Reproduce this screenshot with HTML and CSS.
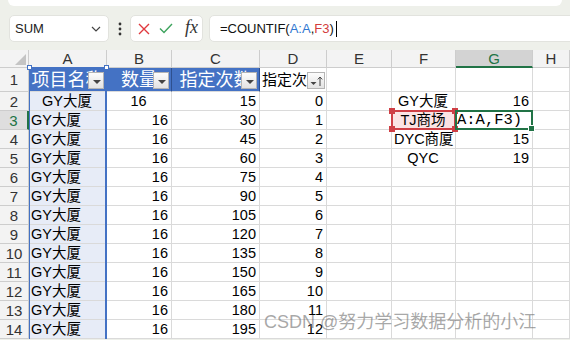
FILE: index.html
```html
<!DOCTYPE html>
<html lang="zh">
<head>
    <meta charset="UTF-8">
    <meta name="viewport" content="width=device-width, initial-scale=1.0">
    <title>COUNTIF</title>
    <link rel="stylesheet" href="styles.css">
</head>
<body>
    <div class="ribbon-edge"></div>

    <div class="formula-bar">
        <div class="name-box">
            <span>SUM</span>
            <svg width="10" height="6" viewBox="0 0 10 6"><polyline points="1,1 5,5 9,1" fill="none" stroke="#444" stroke-width="1.2"/></svg>
        </div>
        <div class="more">
            <svg width="4" height="14" viewBox="0 0 4 14"><circle cx="2" cy="2" r="1.4" fill="#333"/><circle cx="2" cy="7" r="1.4" fill="#333"/><circle cx="2" cy="12" r="1.4" fill="#333"/></svg>
        </div>
        <div class="fx-box">
            <svg width="12" height="12" viewBox="0 0 12 12"><path d="M1 1L11 11M11 1L1 11" stroke="#e0393e" stroke-width="1.4" fill="none"/></svg>
            <svg width="14" height="11" viewBox="0 0 14 11"><polyline points="1,5.5 5,9.5 13,1" fill="none" stroke="#3da35d" stroke-width="1.4"/></svg>
            <span class="fx">fx</span>
        </div>
        <div class="formula-input">=COUNTIF(<span class="ref-a">A:A</span>,<span class="ref-f">F3</span>)<span class="caret"></span></div>
    </div>

    <div class="sheet-wrap">
        <div class="sheet">
            <div class="corner"></div><div class="ch">A</div><div class="ch">B</div><div class="ch">C</div><div class="ch">D</div><div class="ch">E</div><div class="ch">F</div><div class="ch sel">G</div><div class="ch">H</div>

            <div class="rh">1</div>
            <div class="c th">项目名称<span class="filter"></span></div>
            <div class="c th">数量<span class="filter"></span></div>
            <div class="c th">指定次数<span class="filter"></span></div>
            <div class="c d1">指定次数<span class="filter sort"><svg width="16" height="14" viewBox="0 0 16 14"><path d="M2.5 8h6l-3 3z" fill="#444"/><path d="M12 12V3M9.8 5.4L12 3l2.2 2.4" stroke="#444" stroke-width="1" fill="none"/></svg></span></div>
            <div class="c"></div><div class="c"></div><div class="c"></div><div class="c"></div>

            <div class="rh">2</div><div class="c a ctr">GY大厦</div><div class="c ctr">16</div><div class="c n">15</div><div class="c n">0</div><div class="c"></div><div class="c ctr">GY大厦</div><div class="c n">16</div><div class="c"></div>
            <div class="rh sel">3</div><div class="c a">GY大厦</div><div class="c n">16</div><div class="c n">30</div><div class="c n">1</div><div class="c"></div><div class="c ctr pink">TJ商场</div><div class="c edit">A:A,F3)</div><div class="c"></div>
            <div class="rh">4</div><div class="c a">GY大厦</div><div class="c n">16</div><div class="c n">45</div><div class="c n">2</div><div class="c"></div><div class="c ctr">DYC商厦</div><div class="c n">15</div><div class="c"></div>
            <div class="rh">5</div><div class="c a">GY大厦</div><div class="c n">16</div><div class="c n">60</div><div class="c n">3</div><div class="c"></div><div class="c ctr">QYC</div><div class="c n">19</div><div class="c"></div>
            <div class="rh">6</div><div class="c a">GY大厦</div><div class="c n">16</div><div class="c n">75</div><div class="c n">4</div><div class="c"></div><div class="c"></div><div class="c"></div><div class="c"></div>
            <div class="rh">7</div><div class="c a">GY大厦</div><div class="c n">16</div><div class="c n">90</div><div class="c n">5</div><div class="c"></div><div class="c"></div><div class="c"></div><div class="c"></div>
            <div class="rh">8</div><div class="c a">GY大厦</div><div class="c n">16</div><div class="c n">105</div><div class="c n">6</div><div class="c"></div><div class="c"></div><div class="c"></div><div class="c"></div>
            <div class="rh">9</div><div class="c a">GY大厦</div><div class="c n">16</div><div class="c n">120</div><div class="c n">7</div><div class="c"></div><div class="c"></div><div class="c"></div><div class="c"></div>
            <div class="rh">10</div><div class="c a">GY大厦</div><div class="c n">16</div><div class="c n">135</div><div class="c n">8</div><div class="c"></div><div class="c"></div><div class="c"></div><div class="c"></div>
            <div class="rh">11</div><div class="c a">GY大厦</div><div class="c n">16</div><div class="c n">150</div><div class="c n">9</div><div class="c"></div><div class="c"></div><div class="c"></div><div class="c"></div>
            <div class="rh">12</div><div class="c a">GY大厦</div><div class="c n">16</div><div class="c n">165</div><div class="c n">10</div><div class="c"></div><div class="c"></div><div class="c"></div><div class="c"></div>
            <div class="rh">13</div><div class="c a">GY大厦</div><div class="c n">16</div><div class="c n">180</div><div class="c n">11</div><div class="c"></div><div class="c"></div><div class="c"></div><div class="c"></div>
            <div class="rh">14</div><div class="c a">GY大厦</div><div class="c n">16</div><div class="c n">195</div><div class="c n">12</div><div class="c"></div><div class="c"></div><div class="c"></div><div class="c"></div>
        </div>

        <!-- range highlights drawn over the grid -->
        <div class="marks">
            <div class="mark-col-a"><span class="knob tl"></span><span class="knob tr"></span></div>
            <div class="mark-b"></div>
            <div class="mark-f"></div>
            <div class="mark-f3"><span class="handle tl"></span><span class="handle tr"></span><span class="handle bl"></span><span class="handle br"></span></div>
            <div class="mark-g3"><span class="fill-handle"></span></div>
        </div>
    </div>

    <div class="watermark">CSDN @努力学习数据分析的小江</div>
</body>
</html>
```

FILE: styles.css
```css
body {
    margin: 0;
    width: 570px;
    height: 340px;
    overflow: hidden;
    position: relative;
    background: #eef0ea;
    font-family: "Liberation Sans", "Noto Sans CJK SC", sans-serif;
}
.ribbon-edge {
    height: 6px;
    margin: 0 8px;
    background: #fff;
    border-radius: 0 0 7px 7px;
}

/* formula bar */
.formula-bar {
    display: flex;
    height: 27px;
    margin-top: 9px;
    padding-left: 9px;
}
.name-box,
.fx-box,
.formula-input {
    box-sizing: border-box;
    background: #fff;
    border: 1px solid #e2e3de;
    border-radius: 5px;
    display: flex;
    align-items: center;
}
.name-box {
    width: 100px;
    justify-content: space-between;
    padding: 0 7px 0 5px;
    font-size: 13px;
    color: #222;
}
.more {
    width: 21px;
    display: flex;
    align-items: center;
    justify-content: center;
}
.fx-box {
    width: 73px;
    padding-left: 7px;
    gap: 9px;
}
.fx {
    font-family: "Liberation Serif", serif;
    font-style: italic;
    font-size: 18px;
    color: #333;
    margin-left: 3px;
    margin-top: -2px;
}
.formula-input {
    flex: 1;
    margin-left: 6px;
    margin-right: -10px;
    padding-left: 10px;
    font-size: 13px;
    color: #111;
}
.ref-a { color: #2f77d1; }
.ref-f { color: #d33c3c; }
.caret {
    display: inline-block;
    width: 1px;
    height: 16px;
    margin-left: 2px;
    background: #000;
}

/* sheet */
.sheet-wrap {
    display: grid;
    margin-top: 8px;
}
.sheet,
.marks {
    grid-area: 1 / 1;
    display: grid;
    grid-template-columns: 29px 78px 65px 88px 67px 65px 64px 77px 1fr;
    grid-template-rows: 18px 24px repeat(13, 19px);
}
.sheet {
    background: #fff;
}
.marks {
    pointer-events: none;
}
.corner,
.ch,
.rh,
.c {
    box-sizing: border-box;
    border-right: 1px solid #dadada;
    border-bottom: 1px solid #dadada;
    white-space: nowrap;
    overflow: hidden;
    position: relative;
}
.corner,
.ch,
.rh {
    background: #f3f3f3;
    border-color: #cdcdcd;
    color: #333;
    font-size: 15px;
    text-align: center;
}
.corner::after {
    content: "";
    position: absolute;
    right: 2px;
    bottom: 2px;
    border-left: 11px solid transparent;
    border-bottom: 11px solid #c4c4c4;
}
.ch {
    line-height: 18px;
}
.ch.sel {
    background: #d3d3d3;
    color: #217346;
    border-bottom: 2px solid #217346;
}
.rh {
    line-height: 19px;
}
.rh:nth-child(10) {
    line-height: 24px;
}
.rh.sel {
    background: #dedede;
    color: #217346;
    border-right: 2px solid #217346;
}
.c {
    font-size: 14.5px;
    line-height: 19px;
    padding: 0 3px 0 2px;
    color: #000;
}
.a { background: #e7ecf7; }
.n { text-align: right; }
.ctr { text-align: center; }
.pink { background: #fbe3e3; }
.edit {
    font-family: "Liberation Mono", monospace;
    font-size: 15.5px;
    padding-left: 1px;
    overflow: visible;
}
.th {
    background: #4472c4;
    color: #fff;
    font-size: 18px;
    line-height: 24px;
    text-align: center;
    padding: 0;
    border-right-color: #2e508f;
}
.d1 {
    font-size: 15px;
    line-height: 24px;
}

/* filter buttons */
.filter {
    position: absolute;
    right: 2px;
    bottom: 2px;
    width: 16px;
    height: 17px;
    box-sizing: border-box;
    border: 1px solid #b4b4b4;
    background: linear-gradient(#fcfcfc, #e3e3e3);
}
.filter::after {
    content: "";
    position: absolute;
    left: 4px;
    top: 7px;
    border-left: 4px solid transparent;
    border-right: 4px solid transparent;
    border-top: 4px solid #444;
}
.filter.sort {
    width: 18px;
    right: 1px;
}
.filter.sort::after {
    display: none;
}
.filter.sort svg {
    display: block;
    margin: 1px 0 0 0;
}

/* range highlights */
.mark-col-a {
    grid-column: 2;
    grid-row: 2 / 16;
    border-left: 1px solid #4472c4;
    border-right: 2px solid #4472c4;
    border-top: 1px solid #4472c4;
    margin-top: -1px;
    position: relative;
}
.knob {
    position: absolute;
    top: -3px;
    width: 5px;
    height: 5px;
    box-sizing: border-box;
    border: 1px solid #4472c4;
    background: #fff;
}
.knob.tl { left: -3px; }
.knob.tr { right: -4px; }
.mark-b {
    grid-column: 3;
    grid-row: 3 / 7;
    border: 1px solid #4472c4;
    border-left: none;
    margin-top: -1px;
}
.mark-f {
    grid-column: 7;
    grid-row: 3 / 7;
    border: 1px solid #4a74c9;
    margin: -1px 0 0 -1px;
}
.mark-f3 {
    grid-column: 7;
    grid-row: 4;
    border: 2px solid #cf3f45;
    margin: -1px 0 0 -1px;
    position: relative;
}
.handle {
    position: absolute;
    width: 6px;
    height: 6px;
    background: #cf3f45;
}
.handle.tl { left: -4px; top: -4px; }
.handle.tr { right: -4px; top: -4px; }
.handle.bl { left: -4px; bottom: -4px; }
.handle.br { right: -4px; bottom: -4px; }
.mark-g3 {
    grid-column: 8;
    grid-row: 4;
    border: 2px solid #217346;
    margin: -1px 0 0 -1px;
    position: relative;
}
.fill-handle {
    position: absolute;
    right: -4px;
    bottom: -4px;
    width: 5px;
    height: 5px;
    background: #217346;
    border: 1px solid #fff;
}

.watermark {
    position: absolute;
    left: 264px;
    top: 307px;
    font-size: 18px;
    color: rgba(110, 110, 110, 0.6);
    white-space: nowrap;
}
```
